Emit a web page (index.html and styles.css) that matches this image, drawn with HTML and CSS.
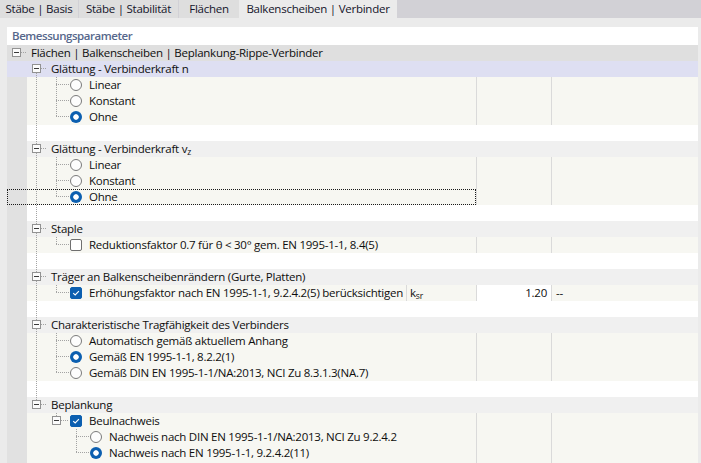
FILE: index.html
```html
<!DOCTYPE html>
<html lang="de">
<head>
<meta charset="utf-8">
<title>Bemessungsparameter</title>
<link rel="stylesheet" href="styles.css">
</head>
<body>
<div class="tabs">
  <div class="tab tab-basis">Stäbe | Basis</div>
  <div class="tab tab-stab">Stäbe | Stabilität</div>
  <div class="tab tab-fl">Flächen</div>
  <div class="tab active">Balkenscheiben | Verbinder</div>
</div>

<div class="panel">
  <div class="title">Bemessungsparameter</div>

  <div class="row root">
    <div class="main"><span class="cell c-broot"><span class="exp"></span></span><span class="lbl">Flächen | Balkenscheiben | Beplankung-Rippe-Verbinder</span></div>
    <div class="c2"></div><div class="c3"></div>
  </div>
  <div class="row sel">
    <div class="main"><span class="cell"></span><span class="cell c-bfirst"><span class="exp"></span></span><span class="lbl">Glättung - Verbinderkraft n</span></div>
    <div class="c2"></div><div class="c3"></div>
  </div>
  <div class="row item">
    <div class="main"><span class="cell strip"></span><span class="cell c-v"></span><span class="cell own c-t"></span><span class="radio"></span><span class="lbl">Linear</span></div>
    <div class="c2"></div><div class="c3"></div>
  </div>
  <div class="row item">
    <div class="main"><span class="cell strip"></span><span class="cell c-v"></span><span class="cell own c-t"></span><span class="radio"></span><span class="lbl">Konstant</span></div>
    <div class="c2"></div><div class="c3"></div>
  </div>
  <div class="row item">
    <div class="main"><span class="cell strip"></span><span class="cell c-v"></span><span class="cell own c-l"></span><span class="radio on"></span><span class="lbl">Ohne</span></div>
    <div class="c2"></div><div class="c3"></div>
  </div>
  <div class="row blank">
    <div class="main"><span class="cell strip"></span><span class="cell c-v"></span></div>
    <div class="c2"></div><div class="c3"></div>
  </div>

  <div class="row grp">
    <div class="main"><span class="cell strip"></span><span class="cell c-bmid"><span class="exp"></span></span><span class="lbl">Glättung - Verbinderkraft v<sub>z</sub></span></div>
    <div class="c2"></div><div class="c3"></div>
  </div>
  <div class="row item">
    <div class="main"><span class="cell strip"></span><span class="cell c-v"></span><span class="cell own c-t"></span><span class="radio"></span><span class="lbl">Linear</span></div>
    <div class="c2"></div><div class="c3"></div>
  </div>
  <div class="row item">
    <div class="main"><span class="cell strip"></span><span class="cell c-v"></span><span class="cell own c-t"></span><span class="radio"></span><span class="lbl">Konstant</span></div>
    <div class="c2"></div><div class="c3"></div>
  </div>
  <div class="row item focus">
    <div class="main"><span class="cell strip"></span><span class="cell c-v"></span><span class="cell own c-l"></span><span class="radio on"></span><span class="lbl">Ohne</span></div>
    <div class="c2"></div><div class="c3"></div>
  </div>
  <div class="row blank">
    <div class="main"><span class="cell strip"></span><span class="cell c-v"></span></div>
    <div class="c2"></div><div class="c3"></div>
  </div>

  <div class="row grp">
    <div class="main"><span class="cell strip"></span><span class="cell c-bmid"><span class="exp"></span></span><span class="lbl">Staple</span></div>
    <div class="c2"></div><div class="c3"></div>
  </div>
  <div class="row item">
    <div class="main"><span class="cell strip"></span><span class="cell c-v"></span><span class="cell own c-l"></span><span class="check"></span><span class="lbl">Reduktionsfaktor 0.7 für θ &lt; 30° gem. EN 1995-1-1, 8.4(5)</span></div>
    <div class="c2"></div><div class="c3"></div>
  </div>
  <div class="row blank">
    <div class="main"><span class="cell strip"></span><span class="cell c-v"></span></div>
    <div class="c2"></div><div class="c3"></div>
  </div>

  <div class="row grp">
    <div class="main"><span class="cell strip"></span><span class="cell c-bmid"><span class="exp"></span></span><span class="lbl">Träger an Balkenscheibenrändern (Gurte, Platten)</span></div>
    <div class="c2"></div><div class="c3"></div>
  </div>
  <div class="row item">
    <div class="main">
      <div class="tp"><span class="cell strip"></span><span class="cell c-v"></span><span class="cell own c-l"></span><span class="check on"><svg viewBox="0 0 10 10" width="10" height="10"><path d="M2.2 5.1 L4.2 7 L7.9 3.1" fill="none" stroke="#fff" stroke-width="1.1"/></svg></span><span class="lbl">Erhöhungsfaktor nach EN 1995-1-1, 9.2.4.2(5) berücksichtigen</span></div>
      <div class="sym">k<sub>sr</sub></div>
    </div>
    <div class="c2 val">1.20</div><div class="c3"><span class="unit">--</span></div>
  </div>
  <div class="row blank">
    <div class="main"><span class="cell strip"></span><span class="cell c-v"></span></div>
    <div class="c2"></div><div class="c3"></div>
  </div>

  <div class="row grp">
    <div class="main"><span class="cell strip"></span><span class="cell c-bmid"><span class="exp"></span></span><span class="lbl">Charakteristische Tragfähigkeit des Verbinders</span></div>
    <div class="c2"></div><div class="c3"></div>
  </div>
  <div class="row item">
    <div class="main"><span class="cell strip"></span><span class="cell c-v"></span><span class="cell own c-t"></span><span class="radio"></span><span class="lbl">Automatisch gemäß aktuellem Anhang</span></div>
    <div class="c2"></div><div class="c3"></div>
  </div>
  <div class="row item">
    <div class="main"><span class="cell strip"></span><span class="cell c-v"></span><span class="cell own c-t"></span><span class="radio on"></span><span class="lbl">Gemäß EN 1995-1-1, 8.2.2(1)</span></div>
    <div class="c2"></div><div class="c3"></div>
  </div>
  <div class="row item">
    <div class="main"><span class="cell strip"></span><span class="cell c-v"></span><span class="cell own c-l"></span><span class="radio"></span><span class="lbl">Gemäß DIN EN 1995-1-1/NA:2013, NCI Zu 8.3.1.3(NA.7)</span></div>
    <div class="c2"></div><div class="c3"></div>
  </div>
  <div class="row blank">
    <div class="main"><span class="cell strip"></span><span class="cell c-v"></span></div>
    <div class="c2"></div><div class="c3"></div>
  </div>

  <div class="row grp">
    <div class="main"><span class="cell strip"></span><span class="cell c-blast"><span class="exp"></span></span><span class="lbl">Beplankung</span></div>
    <div class="c2"></div><div class="c3"></div>
  </div>
  <div class="row item">
    <div class="main"><span class="cell strip"></span><span class="cell"></span><span class="cell own c-bonly"><span class="exp"></span></span><span class="check on"><svg viewBox="0 0 10 10" width="10" height="10"><path d="M2.2 5.1 L4.2 7 L7.9 3.1" fill="none" stroke="#fff" stroke-width="1.1"/></svg></span><span class="lbl">Beulnachweis</span></div>
    <div class="c2"></div><div class="c3"></div>
  </div>
  <div class="row item">
    <div class="main"><span class="cell strip"></span><span class="cell"></span><span class="cell"></span><span class="cell own c-t"></span><span class="radio"></span><span class="lbl">Nachweis nach DIN EN 1995-1-1/NA:2013, NCI Zu 9.2.4.2</span></div>
    <div class="c2"></div><div class="c3"></div>
  </div>
  <div class="row item">
    <div class="main"><span class="cell strip"></span><span class="cell"></span><span class="cell"></span><span class="cell own c-l"></span><span class="radio on"></span><span class="lbl">Nachweis nach EN 1995-1-1, 9.2.4.2(11)</span></div>
    <div class="c2"></div><div class="c3"></div>
  </div>
  <div class="row item">
    <div class="main"><span class="cell strip"></span></div>
    <div class="c2"></div><div class="c3"></div>
  </div>
</div>
</body>
</html>
```

FILE: styles.css
```css
* { box-sizing: border-box; }

:root {
  --dv: repeating-linear-gradient(to bottom, #a3a3a3 0 1px, transparent 1px 2px);
  --dh: repeating-linear-gradient(to right, #a3a3a3 0 1px, transparent 1px 2px);
  --blue: #0c5fb0;
}

html, body { height: 100%; }

body {
  margin: 0;
  background: #ebebeb;
  font-family: "Open Sans", "Noto Sans", sans-serif;
  font-size: 11.5px;
  letter-spacing: -0.25px;
  color: #0e0e0e;
  overflow: hidden;
}

/* ---------- tabs ---------- */
.tabs {
  display: flex;
  height: 18px;
  background: #d2d1d6;
}
.tab {
  height: 18px;
  line-height: 18px;
  text-align: center;
  background: #dedede;
  color: #14142a;
  white-space: nowrap;
  margin-right: 1px;
}
.tab-basis { width: 78px; }
.tab-stab { width: 99px; }
.tab-fl { width: 60px; margin-right: 0; }
.tab.active { width: 158px; background: #ebebeb; }

/* ---------- panel ---------- */
.panel {
  margin: 9px 3px 0 7px;
  background: #fff;
}
.title {
  height: 18px;
  line-height: 18px;
  padding-left: 5px;
  font-weight: 600;
  letter-spacing: -0.45px;
  color: #56678b;
}

.row {
  display: grid;
  grid-template-columns: 469px 75px 1fr;
  height: 16px;
  line-height: 16px;
}
.main {
  display: flex;
  align-items: center;
  height: 16px;
  overflow: hidden;
  white-space: nowrap;
}
.tp {
  flex: 1;
  min-width: 0;
  display: flex;
  align-items: center;
  height: 16px;
  overflow: hidden;
}
.sym {
  flex: none;
  width: 70px;
  height: 16px;
  border-left: 1px solid #dadada;
  padding-left: 3px;
}
.c2, .c3 { height: 16px; }

.row.root { background: #dfdfdf; }
.row.sel { background: #dedff2; }
.row.grp { background: #f0f0f0; }
.row.blank { background: #fff; }
.row.item { background: #f7f7f2; }
.row.item .c2,
.row.item .c3 { border-left: 1px solid #dadada; }
.c2.val { background: #fff; text-align: right; padding-right: 4px; }
.unit { padding-left: 4px; }

.row.focus .main {
  outline: 1px dotted #1a1a1a;
  outline-offset: -1px;
}

/* ---------- tree ---------- */
.cell {
  flex: none;
  display: block;
  width: 20px;
  height: 16px;
}
.cell.own { width: 22px; }
.strip { background: #e1e1e1; }

.c-v { background: var(--dv) 9px 0 / 1px 16px no-repeat; }
.c-t { background: var(--dh) 9px 7px / 13px 1px no-repeat, var(--dv) 9px 0 / 1px 16px no-repeat; }
.c-l { background: var(--dh) 9px 7px / 13px 1px no-repeat, var(--dv) 9px 0 / 1px 8px no-repeat; }
.c-broot { background: var(--dh) 14px 7px / 6px 1px no-repeat; }
.c-bfirst { background: var(--dh) 14px 7px / 6px 1px no-repeat, var(--dv) 9px 12px / 1px 4px no-repeat; }
.c-bmid { background: var(--dh) 14px 7px / 6px 1px no-repeat, var(--dv) 9px 0 / 1px 16px no-repeat; }
.c-blast { background: var(--dh) 14px 7px / 6px 1px no-repeat, var(--dv) 9px 0 / 1px 3px no-repeat; }
.c-bonly { background: var(--dh) 14px 7px / 8px 1px no-repeat, var(--dv) 9px 0 / 1px 3px no-repeat; }

.exp {
  display: block;
  width: 9px;
  height: 9px;
  margin: 3px 0 0 5px;
  border: 1px solid #929292;
  background: linear-gradient(#3a3a3a, #3a3a3a) center / 5px 1px no-repeat, #fbfbfb;
}

.lbl { margin-left: 4px; }
.radio + .lbl,
.check + .lbl { margin-left: 7px; }

.radio {
  flex: none;
  width: 12px;
  height: 12px;
  margin-left: 1px;
  border-radius: 50%;
  border: 1px solid #7b7b7b;
  background: #fdfdfd;
}
.radio.on {
  border: none;
  background: radial-gradient(circle at center, #fff 2.4px, var(--blue) 3.1px);
}

.check {
  flex: none;
  display: flex;
  align-items: center;
  justify-content: center;
  width: 12px;
  height: 12px;
  margin-left: 1px;
  border: 1px solid #6f6f6f;
  border-radius: 2px;
  background: #fff;
}
.check.on {
  border-color: var(--blue);
  background: var(--blue);
}
.check svg { display: block; }

sub {
  font-size: 8.5px;
  line-height: 0;
  vertical-align: -2px;
  letter-spacing: 0;
}
```
